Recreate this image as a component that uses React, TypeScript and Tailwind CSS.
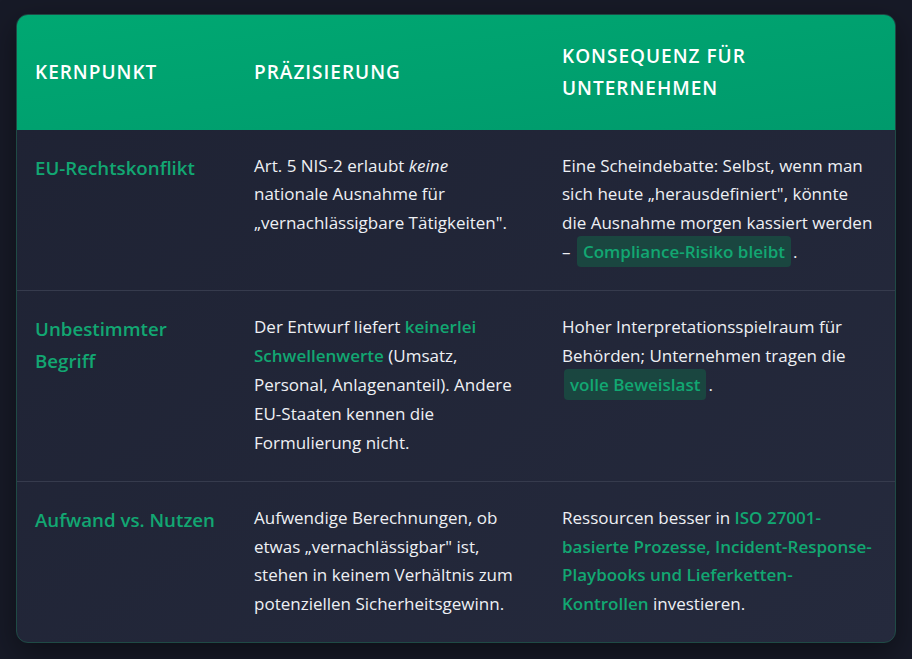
import React from "react";

const Hl = ({ children }: { children: React.ReactNode }) => (
  <span className="font-semibold text-[#12a772]">{children}</span>
);

const Badge = ({ children }: { children: React.ReactNode }) => (
  <span className="mx-[2px] rounded-[4px] bg-[#1a4640] px-[6px] py-[4px] font-semibold text-[#12a772]">
    {children}
  </span>
);

const rows: { k: string; p: React.ReactNode; c: React.ReactNode }[] = [
  {
    k: "EU-Rechtskonflikt",
    p: (
      <>
        Art. 5 NIS-2 erlaubt <em>keine</em> nationale Ausnahme für „vernachlässigbare Tätigkeiten".
      </>
    ),
    c: (
      <>
        Eine Scheindebatte: Selbst, wenn man sich heute „herausdefiniert", könnte die Ausnahme morgen kassiert werden
        {" –\u00a0"}
        <Badge>Compliance-Risiko bleibt</Badge>.
      </>
    ),
  },
  {
    k: "Unbestimmter Begriff",
    p: (
      <>
        Der Entwurf liefert <Hl>keinerlei Schwellenwerte</Hl> (Umsatz, Personal, Anlagenanteil). Andere EU-Staaten kennen die
        Formulierung nicht.
      </>
    ),
    c: (
      <>
        Hoher Interpretationsspielraum für Behörden; Unternehmen tragen die <Badge>volle Beweislast</Badge>.
      </>
    ),
  },
  {
    k: "Aufwand vs. Nutzen",
    p: (
      <>
        Aufwendige Berechnungen, ob etwas „vernachlässigbar" ist, stehen in keinem Verhältnis zum potenziellen
        Sicherheitsgewinn.
      </>
    ),
    c: (
      <>
        Ressourcen besser in <Hl>ISO 27001-basierte Prozesse, Incident-Response-Playbooks und Lieferketten-Kontrollen</Hl>{" "}
        investieren.
      </>
    ),
  },
];

export default function App() {
  return (
    <div
      className="min-h-[659px] w-full bg-[#171a27] px-4 pt-[14px]"
      style={{ fontFamily: '"Open Sans", "Noto Sans", sans-serif' }}
    >
      <div className="overflow-hidden rounded-[12px] border border-[#1f4a45] bg-gradient-to-br from-[#1e2233] to-[#252a3d] shadow-[0_10px_30px_rgba(0,0,0,0.4)]">
        <div className="grid grid-cols-[219px_308px_1fr] bg-gradient-to-br from-[#00a872] to-[#009a6c] text-[19px] font-semibold uppercase leading-[1.7] tracking-[1px] text-white">
          <div className="px-[18px] py-[25px] flex items-center">Kernpunkt</div>
          <div className="px-[18px] py-[25px] flex items-center">Präzisierung</div>
          <div className="px-[18px] py-[25px] flex items-center">Konsequenz für Unternehmen</div>
        </div>
        {rows.map((r, i) => (
          <div
            key={i}
            className={`grid grid-cols-[219px_308px_1fr] text-[17px] leading-[1.7] text-[#eef0f4] ${
              i < rows.length - 1 ? "border-b border-[#363b4d]" : ""
            }`}
          >
            <div className="px-[18px] pt-[22px] pb-[23px] text-[18.7px] font-semibold leading-[1.7] text-[#12a772]">{r.k}</div>
            <div className="px-[18px] pt-[22px] pb-[23px]">{r.p}</div>
            <div className="pl-[18px] pr-[20px] pt-[22px] pb-[23px]">{r.c}</div>
          </div>
        ))}
      </div>
    </div>
  );
}
